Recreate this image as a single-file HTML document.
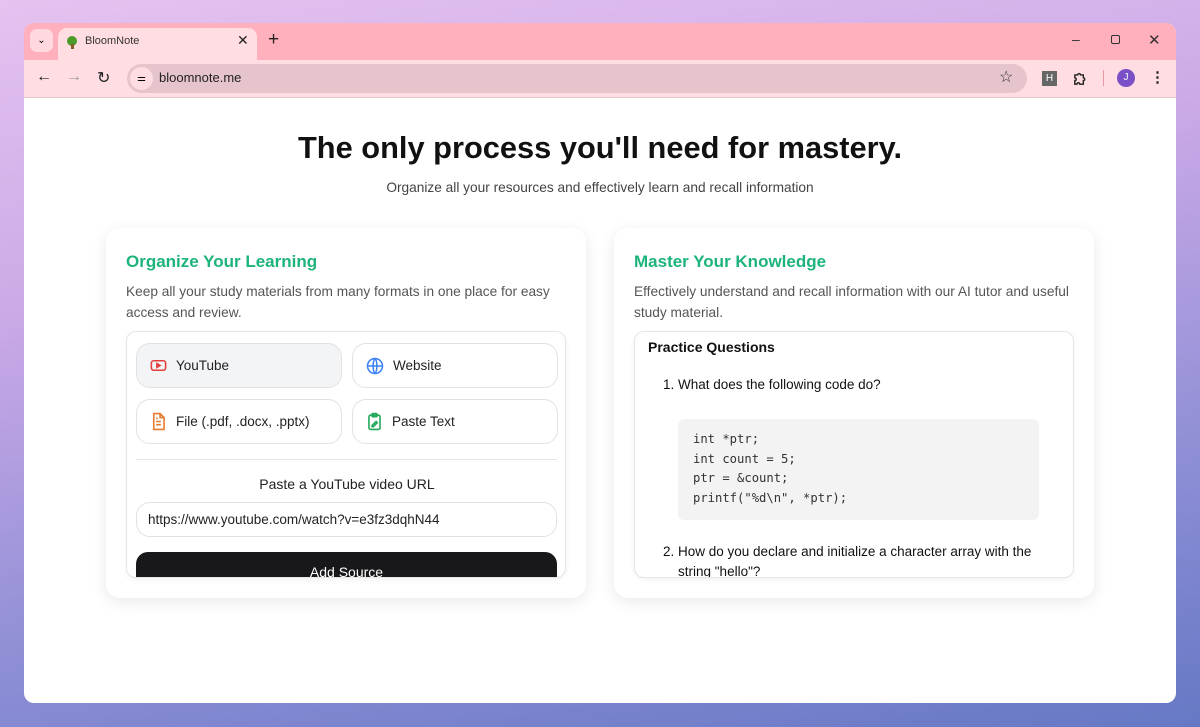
<!DOCTYPE html>
<html><head><style>
*{box-sizing:border-box;margin:0;padding:0}
body{width:1200px;height:727px;overflow:hidden;background:linear-gradient(170deg,#e6c2f0 0%,#c9a8e6 35%,#8f8fd6 70%,#6678c4 100%);font-family:"Liberation Sans",sans-serif;position:relative}
.win{position:absolute;left:24px;top:23px;width:1152px;height:680px;border-radius:10px;overflow:hidden;background:#fff}
.tabbar{height:37px;background:#ffb0bc;position:relative}
.toolbar{height:38px;background:#ffdde3;position:relative;border-bottom:1px solid #e8c7cd}
.abs{position:absolute}
.card{position:absolute;top:205px;width:480px;height:370px;background:#fff;border-radius:14px;box-shadow:0 4px 16px rgba(0,0,0,.09)}
.card h2{position:absolute;left:20px;top:24px;font-size:17px;color:#1cb47a;font-weight:bold}
.card p.d{position:absolute;left:20px;top:53px;width:450px;font-size:13.7px;line-height:21px;color:#555}
.inner{position:absolute;left:20px;top:103px;width:440px;height:247px;border:1px solid #e6e6e6;border-radius:10px;overflow:hidden;background:#fff;box-shadow:0 2px 6px rgba(0,0,0,.05)}
.btn{position:absolute;width:206px;height:45px;border:1px solid #e2e2e2;border-radius:14px;font-size:13.5px;color:#222;display:flex;align-items:center;padding-left:12px;gap:8px}
pre{font-family:"DejaVu Sans Mono","Liberation Mono",monospace;font-size:12.2px;line-height:19.5px;color:#333}
</style></head><body>
<div class="win">
 <div class="tabbar">
  <div class="abs" style="left:6px;top:6px;width:23px;height:23px;background:#ffd9df;border-radius:7px;font-size:10px;text-align:center;line-height:23px">&#8964;</div>
  <div class="abs" style="left:34px;top:5px;width:199px;height:32px;background:#ffdde3;border-radius:9px 9px 0 0"></div>
  <div class="abs" style="left:43px;top:13px;width:10px;height:10px;border-radius:50%;background:#4c9a2a"></div>
  <div class="abs" style="left:47px;top:21px;width:3px;height:5px;background:#8a5a2b"></div>
  <div class="abs" style="left:61px;top:12px;font-size:11px;color:#333">BloomNote</div>
  <div class="abs" style="left:213px;top:9px;font-size:14px;color:#222">✕</div>
  <div class="abs" style="left:244px;top:6px;font-size:19px;color:#222">+</div>
  <div class="abs" style="left:1048px;top:8px;font-size:14px;color:#333">–</div>
  <div class="abs" style="left:1087px;top:12px;width:9px;height:9px;border:1.3px solid #333;border-radius:2px"></div>
  <div class="abs" style="left:1124px;top:8px;font-size:15px;color:#333">✕</div>
 </div>
 <div class="toolbar">
  <div class="abs" style="left:12px;top:8px;font-size:16px;color:#222">←</div>
  <div class="abs" style="left:42px;top:8px;font-size:16px;color:#999">→</div>
  <div class="abs" style="left:73px;top:8px;font-size:16px;color:#222">↻</div>
  <div class="abs" style="left:103px;top:4px;width:900px;height:29px;background:#e6c4cb;border-radius:15px"></div>
  <div class="abs" style="left:106px;top:7px;width:23px;height:23px;background:#ffdde3;border-radius:50%;font-size:10px;text-align:center;line-height:23px">⚌</div>
  <div class="abs" style="left:135px;top:10px;font-size:13px;color:#222">bloomnote.me</div>
  <div class="abs" style="left:975px;top:7px;font-size:16px;color:#333">☆</div>
  <div class="abs" style="left:1018px;top:11px;width:15px;height:15px;background:#666;color:#fff;font-size:10px;text-align:center;line-height:15px">H</div>
  <svg class="abs" style="left:1048px;top:10px" width="17" height="17" viewBox="0 0 24 24" fill="none" stroke="#222" stroke-width="2"><path d="M4 7h4a2 2 0 014 0h4v4a2 2 0 010 4v5h-5a2 2 0 00-4 0H4v-5a2 2 0 000-4z"/></svg>
  <div class="abs" style="left:1079px;top:10px;width:1px;height:16px;background:#e89aa6"></div>
  <div class="abs" style="left:1093px;top:9px;width:18px;height:18px;border-radius:50%;background:#7b4fc8;color:#fff;font-size:10px;text-align:center;line-height:18px">J</div>
  <div class="abs" style="left:1126px;top:8px;font-size:15px;color:#222;font-weight:bold">⋮</div>
 </div>
 <div class="abs" style="left:0;top:107px;width:1152px;text-align:center;font-size:30.8px;font-weight:bold;color:#111">The only process you'll need for mastery.</div>
 <div class="abs" style="left:0;top:157px;width:1152px;text-align:center;font-size:13.7px;color:#444">Organize all your resources and effectively learn and recall information</div>

 <div class="card" style="left:82px">
  <h2>Organize Your Learning</h2>
  <p class="d">Keep all your study materials from many formats in one place for easy access and review.</p>
  <div class="inner">
   <div class="btn" style="left:9px;top:11px;background:#f3f4f6">
    <svg width="19" height="19" viewBox="0 0 24 24" fill="none" stroke="#e53e3e" stroke-width="2"><rect x="3" y="6" width="18" height="12" rx="3"/><path d="M10 9.5l4 2.5-4 2.5z" fill="#e53e3e"/></svg>YouTube</div>
   <div class="btn" style="left:225px;top:11px">
    <svg width="20" height="20" viewBox="0 0 24 24" fill="none" stroke="#3b82f6" stroke-width="1.8"><circle cx="12" cy="12" r="9"/><path d="M3 12h18M12 3c3 3 3 15 0 18M12 3c-3 3-3 15 0 18"/></svg>Website</div>
   <div class="btn" style="left:9px;top:67px">
    <svg width="19" height="19" viewBox="0 0 24 24" fill="none" stroke="#ea7a2c" stroke-width="2"><path d="M6 2h8l5 5v15H6z"/><path d="M14 2v5h5M9 12h6M9 16h6M9 8h2"/></svg>File (.pdf, .docx, .pptx)</div>
   <div class="btn" style="left:225px;top:67px">
    <svg width="19" height="19" viewBox="0 0 24 24" fill="none" stroke="#22a85a" stroke-width="2"><rect x="5" y="4" width="14" height="18" rx="2"/><rect x="9" y="2" width="6" height="4" rx="1"/><path d="M9 17l5-5 1.5 1.5-5 5H9z"/></svg>Paste Text</div>
   <div class="abs" style="left:9px;top:127px;width:421px;height:1px;background:#e5e5e5"></div>
   <div class="abs" style="left:0;top:144px;width:440px;text-align:center;font-size:14px;color:#222">Paste a YouTube video URL</div>
   <div class="abs" style="left:9px;top:170px;width:421px;height:35px;border:1px solid #e2e2e2;border-radius:14px;font-size:13.5px;color:#222;padding:9px 11px">https://www.youtube.com/watch?v=e3fz3dqhN44</div>
   <div class="abs" style="left:9px;top:220px;width:421px;height:40px;background:#18181b;border-radius:12px;color:#fff;font-size:14px;text-align:center;padding-top:12px">Add Source</div>
  </div>
 </div>

 <div class="card" style="left:590px">
  <h2>Master Your Knowledge</h2>
  <p class="d">Effectively understand and recall information with our AI tutor and useful study material.</p>
  <div class="inner">
   <div class="abs" style="left:13px;top:7px;font-size:14px;font-weight:bold;color:#111">Practice Questions</div>
   <div class="abs" style="left:28px;top:45px;font-size:13.5px;color:#111">1. What does the following code do?</div>
   <div class="abs" style="left:43px;top:87px;width:361px;height:101px;background:#f3f3f3;border-radius:6px;padding:11px 15px"><pre>int *ptr;
int count = 5;
ptr = &amp;count;
printf("%d\n", *ptr);</pre></div>
   <div class="abs" style="left:28px;top:210px;width:410px;font-size:13.5px;line-height:20px;color:#111">2. How do you declare and initialize a character array with the<br><span style="padding-left:15px">string "hello"?</span></div>
  </div>
 </div>
</div>
</body></html>
